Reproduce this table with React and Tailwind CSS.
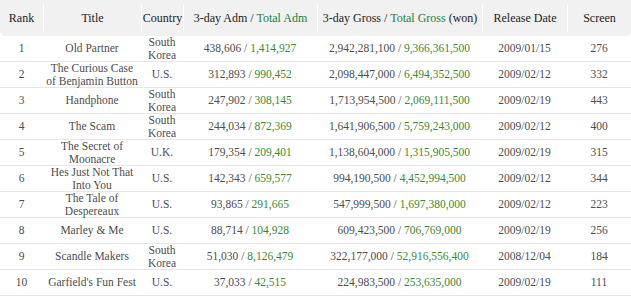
const rows = [
  ["1", ["Old Partner"], ["South", "Korea"], "438,606", "1,414,927", "2,942,281,100", "9,366,361,500", "2009/01/15", "276"],
  ["2", ["The Curious Case", "of Benjamin Button"], ["U.S."], "312,893", "990,452", "2,098,447,000", "6,494,352,500", "2009/02/12", "332"],
  ["3", ["Handphone"], ["South", "Korea"], "247,902", "308,145", "1,713,954,500", "2,069,111,500", "2009/02/19", "443"],
  ["4", ["The Scam"], ["South", "Korea"], "244,034", "872,369", "1,641,906,500", "5,759,243,000", "2009/02/12", "400"],
  ["5", ["The Secret of", "Moonacre"], ["U.K."], "179,354", "209,401", "1,138,604,000", "1,315,905,500", "2009/02/19", "315"],
  ["6", ["Hes Just Not That", "Into You"], ["U.S."], "142,343", "659,577", "994,190,500", "4,452,994,500", "2009/02/12", "344"],
  ["7", ["The Tale of", "Despereaux"], ["U.S."], "93,865", "291,665", "547,999,500", "1,697,380,000", "2009/02/12", "223"],
  ["8", ["Marley & Me"], ["U.S."], "88,714", "104,928", "609,423,500", "706,769,000", "2009/02/19", "256"],
  ["9", ["Scandle Makers"], ["South", "Korea"], "51,030", "8,126,479", "322,177,000", "52,916,556,400", "2008/12/04", "184"],
  ["10", ["Garfield's Fun Fest"], ["U.S."], "37,033", "42,515", "224,983,500", "253,635,000", "2009/02/19", "111"],
];

const grid = "grid grid-cols-[43px_98px_42px_134px_165px_85px_64px]";

function HeadCell({ children, first }) {
  return (
    <div className="flex items-center h-[36px]">
      <div className={`w-full h-[28px] flex items-center justify-center ${first ? "" : "border-l border-white"}`}>
        {children}
      </div>
    </div>
  );
}

function Lines({ lines }) {
  return (
    <div className="flex flex-col items-center justify-center whitespace-nowrap">
      {lines.map((l) => (
        <span key={l}>{l}</span>
      ))}
    </div>
  );
}

export default function App() {
  return (
    <div
      className="w-[631px] h-[298px] bg-white overflow-hidden text-[11.5px] leading-[12.5px]"
      style={{ fontFamily: '"Liberation Serif", "Times New Roman", serif' }}
    >
      <div className={`${grid} bg-[#f1f1f1] rounded-b-[5px] text-[#222] text-[12px]`}>
        <HeadCell first>Rank</HeadCell>
        <HeadCell>Title</HeadCell>
        <HeadCell>Country</HeadCell>
        <HeadCell>
          <span>3-day Adm / <span className="text-[#2b7d3f]">Total Adm</span></span>
        </HeadCell>
        <HeadCell>
          <span>3-day Gross / <span className="text-[#2b7d3f]">Total Gross</span> (won)</span>
        </HeadCell>
        <HeadCell>Release Date</HeadCell>
        <HeadCell>Screen</HeadCell>
      </div>
      {rows.map((r) => (
        <div key={r[0]} className={`${grid} h-[26px] border-b border-[#e6e6e6] text-[#4d4d4d] text-center`}>
          <div className="flex items-center justify-center">{r[0]}</div>
          <Lines lines={r[1]} />
          <Lines lines={r[2]} />
          <div className="flex items-center justify-center">
            <span>{r[3]} / <span className="text-[#3b8a2f]">{r[4]}</span></span>
          </div>
          <div className="flex items-center justify-center">
            <span>{r[5]} / <span className="text-[#3b8a2f]">{r[6]}</span></span>
          </div>
          <div className="flex items-center justify-center">{r[7]}</div>
          <div className="flex items-center justify-center">{r[8]}</div>
        </div>
      ))}
    </div>
  );
}
